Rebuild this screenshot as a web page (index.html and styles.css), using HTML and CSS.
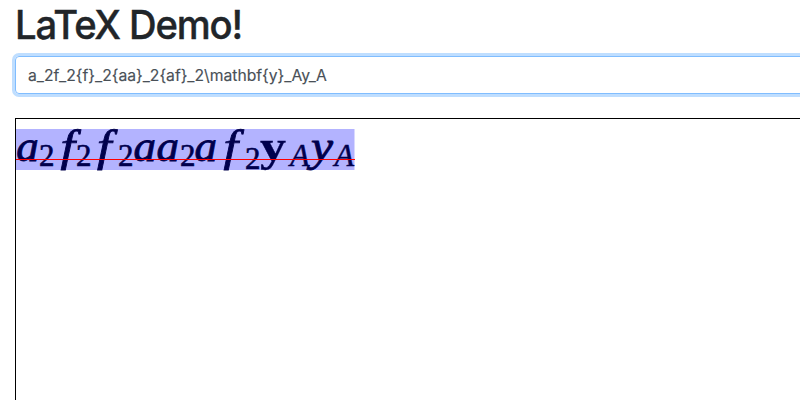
FILE: index.html
```html
<!DOCTYPE html>
<html lang="en">
<head>
<meta charset="utf-8">
<title>LaTeX Demo!</title>
<link rel="stylesheet" href="styles.css">
</head>
<body>
<main class="container">
  <h1 class="title"><span class="title-text">LaTeX Demo!</span></h1>
  <div class="field"><span class="field-text">a_2f_2{f}_2{aa}_2{af}_2\mathbf{y}_Ay_A</span></div>
  <section class="canvas">
    <svg class="formula" width="784" height="281" viewBox="16 119 784 281">
      <rect class="bounds" x="16" y="129" width="338.5" height="41"/>
      <g class="math">
        <text x="16.2" y="160.5" textLength="22.5" lengthAdjust="spacingAndGlyphs">a</text>
        <text class="sub" x="39" y="166">2</text>
        <text x="60.5" y="160.5" textLength="14.5" lengthAdjust="spacingAndGlyphs">f</text>
        <text class="sub" x="76" y="166">2</text>
        <text x="97" y="160.5" textLength="14.5" lengthAdjust="spacingAndGlyphs">f</text>
        <text class="sub" x="118" y="166">2</text>
        <text x="133.5" y="160.5">a</text>
        <text x="156.5" y="160.5">a</text>
        <text class="sub" x="180" y="166">2</text>
        <text x="194.5" y="160.5">a</text>
        <text x="223.5" y="160.5" textLength="14.5" lengthAdjust="spacingAndGlyphs">f</text>
        <text class="sub" x="245" y="169">2</text>
        <text class="bold" x="260" y="160.5" textLength="26" lengthAdjust="spacingAndGlyphs">y</text>
        <text class="sub-letter" x="290" y="166">A</text>
        <text x="311" y="160.5" textLength="22" lengthAdjust="spacingAndGlyphs">y</text>
        <text class="sub-letter" x="334.5" y="166">A</text>
      </g>
      <rect class="rule" x="16" y="159" width="338.5" height="1"/>
    </svg>
  </section>
</main>
</body>
</html>
```
FILE: styles.css
```css
* { box-sizing: border-box; }
body {
  margin: 0;
  height: 400px;
  overflow: hidden;
  background: #fff;
  color: #212529;
  font-family: Inter, "Liberation Sans", sans-serif;
}
.container { width: 830px; padding: 1px 15px 0; }
.title {
  margin: 0 0 7px;
  height: 48px;
  font-size: 40px;
  font-weight: 500;
  line-height: 48px;
  white-space: nowrap;
}
.title-text, .field-text { display: inline-block; transform-origin: left center; }
.title-text { letter-spacing: -1.2px; transform: scaleX(.955); -webkit-text-stroke: .4px #212529; }
.field {
  height: 38px;
  padding: 0 12px;
  border: 1px solid #80bdff;
  border-radius: 4px;
  box-shadow: 0 0 0 3px #bfdeff;
  color: #495057;
  font-size: 16px;
  line-height: 37px;
  white-space: nowrap;
}
.field-text { font-size: 16px; transform: scaleX(.98); -webkit-text-stroke: .15px #495057; }
.canvas {
  height: 300px;
  margin-top: 24px;
  border: 1px solid #000;
}
.formula { display: block; }
.math {
  font: italic 45px "Liberation Serif", serif;
  fill: #00004d;
  stroke: #00004d;
  stroke-width: .8px;
}
.sub { font-size: 31px; font-style: normal; stroke-width: .6px; }
.sub-letter { font-size: 32px; stroke-width: .5px; }
.bold { font-style: normal; font-weight: bold; stroke-width: .3px; }
.bounds { fill: #b3b3ff; }
.rule { fill: #f00; shape-rendering: crispEdges; }
```
